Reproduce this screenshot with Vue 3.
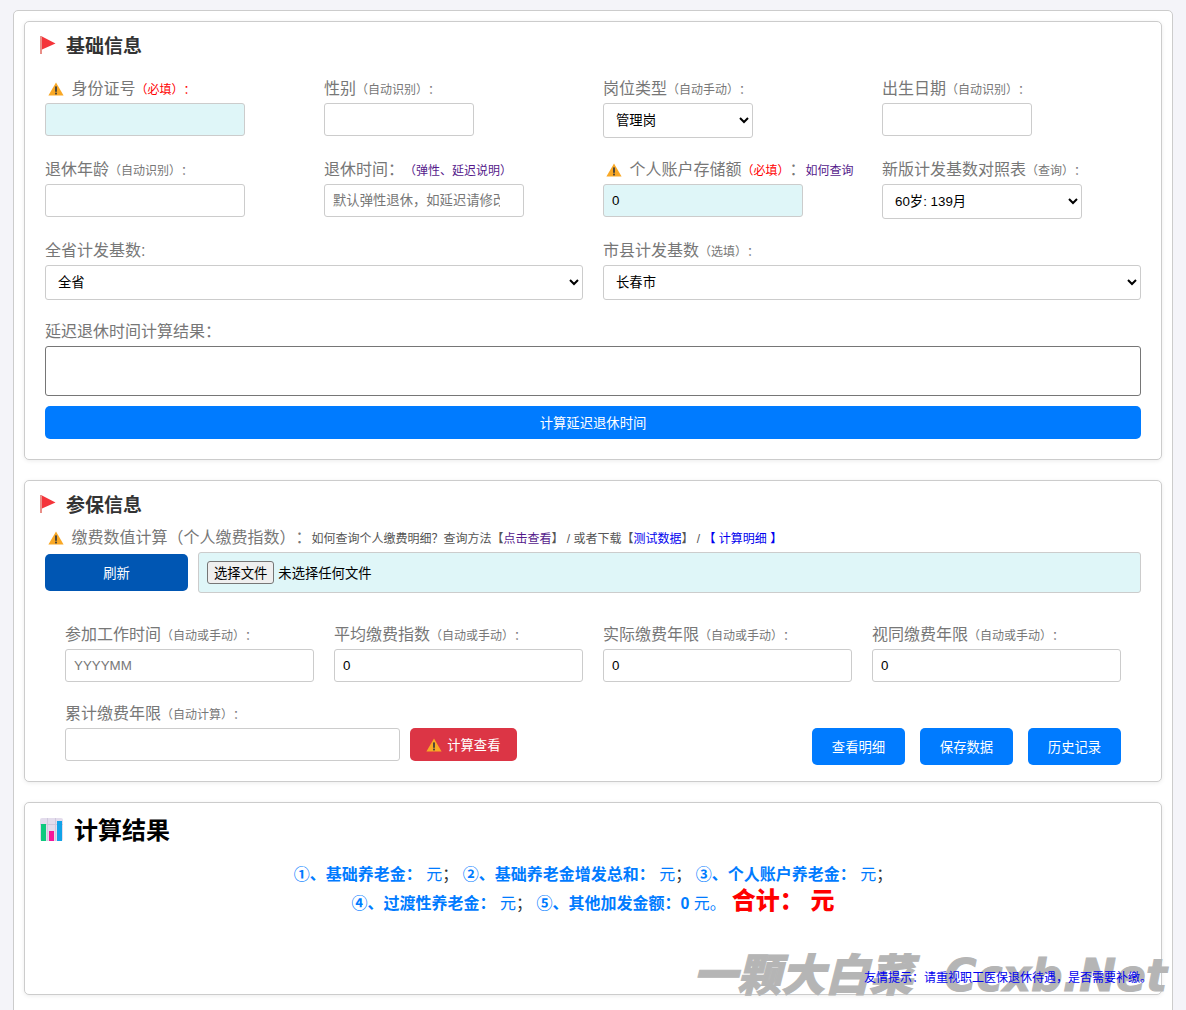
<script setup>
const provinces = ['全省']
const cities = ['长春市']
const posts = ['管理岗']
const baseMonths = ['60岁: 139月']
</script>

<template>
  <div class="page">
    <div class="container">
      <section class="card">
        <h2 class="card__title">
          <svg class="flag" viewBox="0 0 16 18"><rect x="0" y="0" width="2" height="18" fill="#e98f88" /><path d="M2 0.5 L15.5 7.5 L2 13.5 Z" fill="#f4343a" /></svg>
          基础信息
        </h2>

        <div class="grid-4">
          <div class="field">
            <label class="field__label">
              <svg class="warn" viewBox="0 0 16 14"><path d="M8 .6 L15.6 13.6 H.4 Z" fill="#f9a825" /><rect x="7.1" y="4.4" width="1.8" height="5.4" fill="#3c3c3c" /><rect x="7.1" y="10.6" width="1.8" height="1.8" fill="#3c3c3c" /></svg>
              身份证号<small class="req">（必填）：</small>
            </label>
            <input class="input input--md input--hl" type="text" />
          </div>
          <div class="field">
            <label class="field__label">性别<small>（自动识别）：</small></label>
            <input class="input input--sm" type="text" />
          </div>
          <div class="field">
            <label class="field__label">岗位类型<small>（自动手动）：</small></label>
            <select class="select select--sm"><option v-for="p in posts" :key="p">{{ p }}</option></select>
          </div>
          <div class="field">
            <label class="field__label">出生日期<small>（自动识别）：</small></label>
            <input class="input input--sm" type="text" />
          </div>

          <div class="field">
            <label class="field__label">退休年龄<small>（自动识别）：</small></label>
            <input class="input input--md" type="text" />
          </div>
          <div class="field">
            <label class="field__label">退休时间：<small class="link">（弹性、延迟说明）</small></label>
            <input class="input input--md input--clip" type="text" placeholder="默认弹性退休，如延迟请修改" />
          </div>
          <div class="field">
            <label class="field__label">
              <svg class="warn" viewBox="0 0 16 14"><path d="M8 .6 L15.6 13.6 H.4 Z" fill="#f9a825" /><rect x="7.1" y="4.4" width="1.8" height="5.4" fill="#3c3c3c" /><rect x="7.1" y="10.6" width="1.8" height="1.8" fill="#3c3c3c" /></svg>
              个人账户存储额<small class="req">（必填）</small>：<small class="link">如何查询</small>
            </label>
            <input class="input input--md input--hl" type="text" value="0" />
          </div>
          <div class="field">
            <label class="field__label">新版计发基数对照表<small>（查询）：</small></label>
            <select class="select select--md"><option v-for="m in baseMonths" :key="m">{{ m }}</option></select>
          </div>
        </div>

        <div class="grid-2">
          <div class="field">
            <label class="field__label">全省计发基数:</label>
            <select class="select"><option v-for="p in provinces" :key="p">{{ p }}</option></select>
          </div>
          <div class="field">
            <label class="field__label">市县计发基数<small>（选填）：</small></label>
            <select class="select"><option v-for="c in cities" :key="c">{{ c }}</option></select>
          </div>
        </div>

        <div class="field field--delay">
          <label class="field__label">延迟退休时间计算结果：</label>
          <textarea class="result-box"></textarea>
        </div>
        <button class="btn btn--wide" type="button">计算延迟退休时间</button>
      </section>

      <section class="card card--insured">
        <h2 class="card__title">
          <svg class="flag" viewBox="0 0 16 18"><rect x="0" y="0" width="2" height="18" fill="#e98f88" /><path d="M2 0.5 L15.5 7.5 L2 13.5 Z" fill="#f4343a" /></svg>
          参保信息
        </h2>
        <div class="field__label upload-label">
          <svg class="warn" viewBox="0 0 16 14"><path d="M8 .6 L15.6 13.6 H.4 Z" fill="#f9a825" /><rect x="7.1" y="4.4" width="1.8" height="5.4" fill="#3c3c3c" /><rect x="7.1" y="10.6" width="1.8" height="1.8" fill="#3c3c3c" /></svg>
          缴费数值计算（个人缴费指数）：<small class="hint">如何查询个人缴费明细？查询方法【<span class="link">点击查看</span>】 / 或者下载【<span class="link link--blue">测试数据</span>】 / <span class="link--blue">【 计算明细 】</span></small>
        </div>
        <div class="upload-row">
          <button class="btn btn--refresh" type="button">刷新</button>
          <div class="file-box">
            <button class="file-box__btn" type="button">选择文件</button>
            <span>未选择任何文件</span>
          </div>
        </div>

        <div class="insured-form">
          <div class="grid-4">
            <div class="field">
              <label class="field__label">参加工作时间<small>（自动或手动）：</small></label>
              <input class="input" type="text" placeholder="YYYYMM" />
            </div>
            <div class="field">
              <label class="field__label">平均缴费指数<small>（自动或手动）：</small></label>
              <input class="input" type="text" value="0" />
            </div>
            <div class="field">
              <label class="field__label">实际缴费年限<small>（自动或手动）：</small></label>
              <input class="input" type="text" value="0" />
            </div>
            <div class="field">
              <label class="field__label">视同缴费年限<small>（自动或手动）：</small></label>
              <input class="input" type="text" value="0" />
            </div>
          </div>
          <div class="total-row">
            <div class="field total-row__field">
              <label class="field__label">累计缴费年限<small>（自动计算）：</small></label>
              <input class="input" type="text" />
            </div>
            <button class="btn btn--danger" type="button">
              <svg class="warn warn--btn" viewBox="0 0 16 14"><path d="M8 .6 L15.6 13.6 H.4 Z" fill="#f9a825" /><rect x="7.1" y="4.4" width="1.8" height="5.4" fill="#3c3c3c" /><rect x="7.1" y="10.6" width="1.8" height="1.8" fill="#3c3c3c" /></svg>
              计算查看
            </button>
            <div class="total-row__actions">
              <button class="btn btn--action" type="button">查看明细</button>
              <button class="btn btn--action" type="button">保存数据</button>
              <button class="btn btn--action" type="button">历史记录</button>
            </div>
          </div>
        </div>
      </section>

      <section class="card card--result">
        <h2 class="result-title">
          <svg class="chart" viewBox="0 0 23 23">
            <rect x="0" y="0" width="23" height="23" rx="2" fill="#e3dcec" />
            <path d="M0 6.5 H23 M7.5 0 V23 M15.5 0 V23" stroke="#cfc8dc" stroke-width="1" />
            <rect x="1" y="6" width="5" height="17" fill="#0dc97d" />
            <rect x="9" y="13" width="5" height="10" fill="#f5169a" />
            <rect x="17" y="3" width="5" height="20" fill="#12a3e8" />
          </svg>
          计算结果
        </h2>
        <p class="result-line">①、基础养老金： <span class="unit">元</span><i>；</i> ②、基础养老金增发总和： <span class="unit">元</span><i>；</i> ③、个人账户养老金： <span class="unit">元</span><i>；</i></p>
        <p class="result-line">④、过渡性养老金： <span class="unit">元</span><i>；</i> ⑤、其他加发金额：0 <span class="unit">元。</span><strong class="sum">合计： 元</strong></p>
        <p class="tip">友情提示：请重视职工医保退休待遇，是否需要补缴。</p>
        <span class="watermark">一颗大白菜 Ccxb.Net</span>
      </section>
    </div>
  </div>
</template>

<style>
html, body { margin: 0; background: #f4f4f9; }
</style>

<style scoped>
.page {
  height: 1010px;
  overflow: hidden;
  padding: 10px 13px 0;
  box-sizing: border-box;
  font-family: "Liberation Sans", "Noto Sans CJK SC", sans-serif;
  text-spacing-trim: space-all;
  color: #333;
}

.container {
  background: #fff;
  border: 1px solid #ccc;
  border-radius: 5px;
  padding: 10px;
  min-height: 1100px;
}

.card {
  position: relative;
  background: #fff;
  border: 1px solid #ccc;
  border-radius: 5px;
  box-shadow: 0 1px 4px rgba(0, 0, 0, 0.08);
  padding: 0 20px 20px;
  margin-bottom: 20px;
}

.card__title {
  display: flex;
  align-items: center;
  gap: 10px;
  height: 44px;
  margin: 0 0 12px -5px;
  font-size: 19px;
  font-weight: 700;
  color: #333;
}

.flag { width: 16px; height: 18px; margin-top: 2px; }

.warn { width: 16px; height: 14px; vertical-align: -2px; margin: 0 3px 0 3px; }
.warn--btn { margin: 0 1px 0 0; }

.grid-4 {
  display: grid;
  grid-template-columns: repeat(4, 1fr);
  gap: 21px 20px;
  align-items: start;
}

.grid-2 {
  display: grid;
  grid-template-columns: repeat(2, 1fr);
  gap: 20px;
  margin-top: 21px;
}

.field { min-width: 0; }
.field--delay { margin-top: 21px; }

.field__label {
  display: block;
  height: 25px;
  line-height: 22px;
  font-size: 16px;
  color: #777;
  white-space: nowrap;
}

.field__label small { font-size: 12px; }
.field__label .req { color: #f00; }

.link { color: #551a8b; }
.link--blue { color: #00e; }

.input {
  display: block;
  width: 100%;
  height: 33px;
  box-sizing: border-box;
  padding: 0 8px;
  border: 1px solid #ccc;
  border-radius: 3px;
  background: #fff;
  font: inherit;
  font-size: 13.333px;
  color: #000;
}

.input::placeholder { color: #777; }
.input--md { width: 200px; }
.input--sm { width: 150px; }
.input--hl { background: #dff6f8; }
.input--clip { padding-right: 23px; }

.select {
  display: block;
  width: 100%;
  height: 35px;
  box-sizing: border-box;
  padding: 0 8px;
  border: 1px solid #ccc;
  border-radius: 3px;
  background: #fff;
  font: inherit;
  font-size: 13.333px;
  color: #000;
}

.select--md { width: 200px; }
.select--sm { width: 150px; }

.result-box {
  display: block;
  width: 100%;
  height: 50px;
  box-sizing: border-box;
  border: 1px solid #767676;
  border-radius: 3px;
  resize: none;
}

.btn {
  border: 0;
  border-radius: 5px;
  background: #007bff;
  color: #fff;
  font: inherit;
  font-size: 13.333px;
  cursor: pointer;
}

.btn--wide { display: block; width: 100%; height: 33px; margin-top: 10px; }
.btn--refresh { width: 143px; height: 37px; background: #0056b3; margin-top: 2px; flex: none; }
.btn--danger { width: 107px; height: 33px; background: #dc3545; flex: none; padding: 0; }
.btn--action { width: 93px; height: 37px; }

.card--insured { padding-bottom: 16px; }
.card--insured .card__title { margin-bottom: 2px; }

.upload-label { height: 25px; line-height: 22px; }
.upload-label .hint { font-size: 12px; color: #555; }

.upload-row { display: flex; gap: 10px; align-items: flex-start; }

.file-box {
  flex: 1;
  height: 41px;
  box-sizing: border-box;
  display: flex;
  align-items: center;
  gap: 4px;
  padding-left: 8px;
  background: #dff6f8;
  border: 1px solid #ccc;
  border-radius: 3px;
  font-size: 13.333px;
  color: #000;
}

.file-box__btn {
  height: 23px;
  padding: 0 6px;
  font: inherit;
  background: #efefef;
  border: 1px solid #767676;
  border-radius: 3px;
  color: #000;
}

.insured-form { padding: 31px 20px 0; }

.total-row { display: flex; align-items: flex-start; margin-top: 21px; }
.total-row__field { width: 335px; flex: none; margin-right: 10px; }
.total-row .btn { margin-top: 25px; }
.total-row__actions { display: flex; gap: 15px; margin-left: auto; }

.card--result { height: 193px; box-sizing: border-box; padding: 0 20px; text-align: center; }

.result-title {
  display: flex;
  align-items: center;
  gap: 11px;
  height: 50px;
  margin: 0 0 8px -5px;
  font-size: 24px;
  font-weight: 700;
  color: #000;
}

.chart { width: 23px; height: 23px; margin-top: 3px; }

.result-line {
  margin: 0;
  line-height: 28px;
  font-size: 16px;
  font-weight: 700;
  color: #007bff;
}

.result-line .unit { font-weight: 400; }
.result-line i { font-style: normal; font-weight: 400; color: #333; }

.sum { font-size: 24px; line-height: 1; color: #f00; margin-left: 6px; }

.tip {
  position: absolute;
  right: 9px;
  bottom: 9px;
  margin: 0;
  font-size: 12px;
  color: #00e;
  z-index: 1;
}

.watermark {
  position: absolute;
  right: -6px;
  bottom: -10px;
  font-family: "DejaVu Sans", "Noto Sans CJK SC", sans-serif;
  font-size: 44px;
  font-weight: 900;
  font-style: italic;
  word-spacing: 16px;
  color: #b5b5b5;
  -webkit-text-stroke: 1px #b5b5b5;
  white-space: nowrap;
}
</style>
